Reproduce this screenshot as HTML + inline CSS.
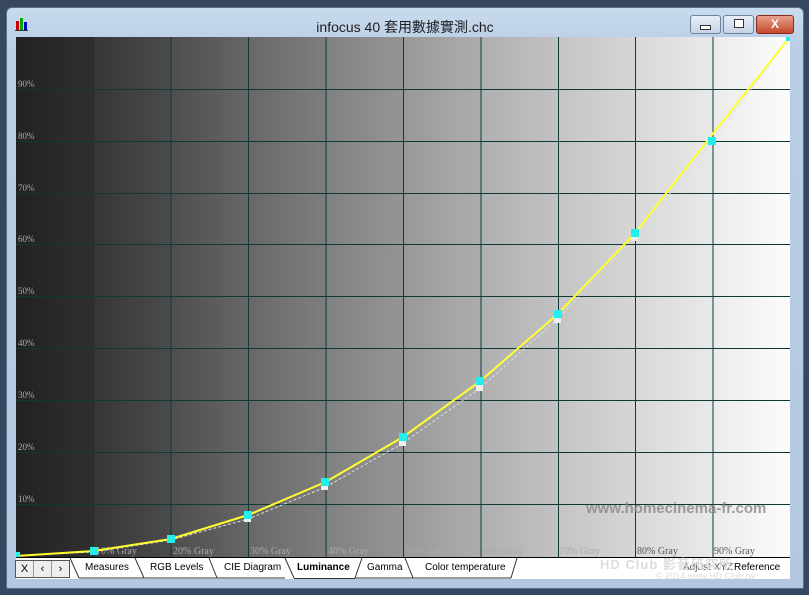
<!DOCTYPE html>
<html><head><meta charset="utf-8"><style>
body{margin:0;width:809px;height:595px;background:#37475f;overflow:hidden;font-family:"Liberation Sans","Noto Sans CJK TC",sans-serif}
.win{position:absolute;left:6px;top:7px;width:796px;height:580px;background:linear-gradient(#c9dbee,#b9cde4 40px,#b3c8e0);border:1px solid #5a6f8c;border-radius:6px 6px 2px 2px}
.title{position:absolute;left:0;right:0;top:9px;text-align:center;font-size:14px;color:#1e1e1e}
.btn{position:absolute;top:7px;height:17px;border:1px solid #6f819b;border-radius:3px;background:linear-gradient(#e8eff8,#c4d3e6)}
.tabs{position:absolute;left:16px;top:557px;width:774px;height:21px;background:#fff;border-top:1px solid #000}
.tab{position:absolute;top:4px;font-size:10px;color:#000}
</style></head><body>
<div class="win">
<svg style="position:absolute;left:8px;top:8px" width="16" height="16"><rect x="1" y="5" width="3" height="10" fill="#c00"/><rect x="5" y="2" width="3" height="13" fill="#0a0"/><rect x="9" y="6" width="3" height="9" fill="#00c"/><rect x="0" y="14" width="13" height="1" fill="#333"/></svg>
<div class="title">infocus 40 套用數據實測.chc</div>
<div class="btn" style="left:683px;width:29px"><div style="margin:9px auto 0;width:9px;height:3px;border:1px solid #333;background:#fff"></div></div>
<div class="btn" style="left:716px;width:29px"><div style="margin:3px auto 0;width:8px;height:7px;border:1px solid #333;background:#fff"></div></div>
<div class="btn" style="left:749px;width:36px;background:linear-gradient(#e8a08c,#c4482d);border-color:#8a2a1a;color:#fff;text-align:center;font-weight:bold;font-size:12px;line-height:17px">X</div>
</div>
<svg style="position:absolute;left:16px;top:37px" width="774" height="520">
<defs>
<linearGradient id="g0"><stop offset="0" stop-color="#222"/><stop offset="1" stop-color="#2f2f2f"/></linearGradient>
<linearGradient id="g1"><stop offset="0" stop-color="#363636"/><stop offset="1" stop-color="#4b4b4b"/></linearGradient>
<linearGradient id="g2"><stop offset="0" stop-color="#4e4e4e"/><stop offset="1" stop-color="#666"/></linearGradient>
<linearGradient id="g3"><stop offset="0" stop-color="#686868"/><stop offset="1" stop-color="#7e7e7e"/></linearGradient>
<linearGradient id="g4"><stop offset="0" stop-color="#808080"/><stop offset="1" stop-color="#959595"/></linearGradient>
<linearGradient id="g5"><stop offset="0" stop-color="#989898"/><stop offset="1" stop-color="#adadad"/></linearGradient>
<linearGradient id="g6"><stop offset="0" stop-color="#afafaf"/><stop offset="1" stop-color="#c2c2c2"/></linearGradient>
<linearGradient id="g7"><stop offset="0" stop-color="#c4c4c4"/><stop offset="1" stop-color="#d6d6d6"/></linearGradient>
<linearGradient id="g8"><stop offset="0" stop-color="#d8d8d8"/><stop offset="1" stop-color="#e9e9e9"/></linearGradient>
<linearGradient id="g9"><stop offset="0" stop-color="#ebebeb"/><stop offset="1" stop-color="#fcfcfc"/></linearGradient>
</defs>
<rect x="0" y="0" width="78" height="520" fill="url(#g0)"/>
<rect x="77.4" y="0" width="78" height="520" fill="url(#g1)"/>
<rect x="154.8" y="0" width="78" height="520" fill="url(#g2)"/>
<rect x="232.2" y="0" width="78" height="520" fill="url(#g3)"/>
<rect x="309.6" y="0" width="78" height="520" fill="url(#g4)"/>
<rect x="387" y="0" width="78" height="520" fill="url(#g5)"/>
<rect x="464.4" y="0" width="78" height="520" fill="url(#g6)"/>
<rect x="541.8" y="0" width="78" height="520" fill="url(#g7)"/>
<rect x="619.2" y="0" width="78" height="520" fill="url(#g8)"/>
<rect x="696.6" y="0" width="78" height="520" fill="url(#g9)"/>
<g stroke="#0d3a38" stroke-width="1">
<path d="M77.5 0V520M155 0V520M232.5 0V520M310 0V520M387.5 0V520M465 0V520M542.5 0V520M619.5 0V520M697 0V520"/>
<path d="M0 467.5H774M0 415.5H774M0 363.5H774M0 311.5H774M0 259.5H774M0 207.5H774M0 156.5H774M0 104.5H774M0 52.5H774"/>
</g>
<g font-family="Liberation Serif,serif" font-size="9" fill="#aaa">
<text x="2" y="465">10%</text><text x="2" y="413">20%</text><text x="2" y="361">30%</text><text x="2" y="309">40%</text><text x="2" y="257">50%</text><text x="2" y="205">60%</text><text x="2" y="154">70%</text><text x="2" y="102">80%</text><text x="2" y="50">90%</text>
</g>
<g font-family="Liberation Serif,serif" font-size="10" fill="#aaa">
<text x="80" y="517">10% Gray</text><text x="157" y="517">20% Gray</text><text x="234" y="517">30% Gray</text><text x="312" y="517">40% Gray</text><text x="389" y="517">50% Gray</text><text x="466" y="517">60% Gray</text><text x="543" y="517">70% Gray</text><text x="621" y="517" fill="#555">80% Gray</text><text x="698" y="517" fill="#555">90% Gray</text>
</g>
<text x="570" y="476" font-family="Liberation Sans,sans-serif" font-weight="bold" font-size="15" fill="#888" opacity="0.8">www.homecinema-fr.com</text>
<polyline fill="none" stroke="#ddd" stroke-width="1" stroke-dasharray="3,2" points="0,519 77.4,515 154.8,503 232.2,482 309.6,450 387,406 464.4,351 541.8,282 619.2,199 696.6,104 774,0"/>
<polyline fill="none" stroke="#ffff30" stroke-width="2" points="0,519 77.4,514 154.8,502 232.2,478 309.6,445 387,400 464.4,344 541.8,277 619.2,196 696.6,97 774,0"/>
<g fill="#eee"><rect x="228" y="478" width="7" height="7"/><rect x="305" y="446" width="7" height="7"/><rect x="383" y="402" width="7" height="7"/><rect x="460" y="347" width="7" height="7"/><rect x="538" y="279" width="7" height="7"/><rect x="615" y="197" width="7" height="7"/></g>
<g fill="#2ee"><rect x="-3" y="515" width="7" height="7"/><rect x="74" y="510" width="8" height="8"/><rect x="151" y="498" width="8" height="8"/><rect x="228" y="474" width="8" height="8"/><rect x="305" y="441" width="8" height="8"/><rect x="383" y="396" width="8" height="8"/><rect x="460" y="340" width="8" height="8"/><rect x="538" y="273" width="8" height="8"/><rect x="615" y="192" width="8" height="8"/><rect x="692" y="100" width="8" height="8"/><rect x="770" y="-2" width="6" height="6"/></g>
</svg>
<div class="tabs">
<div style="position:absolute;left:-1px;top:2px;width:53px;height:16px;border:1px solid #555;background:#eee;font-size:11px;display:flex;line-height:16px"><span style="flex:1;text-align:center;border-right:1px solid #999">X</span><span style="flex:1;text-align:center;border-right:1px solid #999">‹</span><span style="flex:1;text-align:center">›</span></div>
<svg style="position:absolute;left:0;top:0" width="520" height="21"><path d="M54 0L63 20M119 0L128 20M193 0L201 20M269 0L278 20M346 0L339 20M389 0L397 20M501 0L495 20M63 20H269M278 20.5H339M339 20H495" stroke="#333" fill="none"/></svg>
<div class="tab" style="left:69px">Measures</div>
<div class="tab" style="left:134px">RGB Levels</div>
<div class="tab" style="left:208px">CIE Diagram</div>
<div class="tab" style="left:281px;font-weight:bold">Luminance</div>
<div class="tab" style="left:351px">Gamma</div>
<div class="tab" style="left:409px">Color temperature</div>
<div class="tab" style="left:667px;color:#555">Adjust XYZ</div>
<div class="tab" style="left:718px">Reference</div>
<div style="position:absolute;left:584px;top:-4px;font-size:13px;color:#ddd;font-weight:bold;letter-spacing:1px">HD Club 影音研究所</div>
<div style="position:absolute;left:640px;top:13px;font-size:9px;color:#ddd">© 2014 www.HD Club.tw</div>
</div>
</body></html>
